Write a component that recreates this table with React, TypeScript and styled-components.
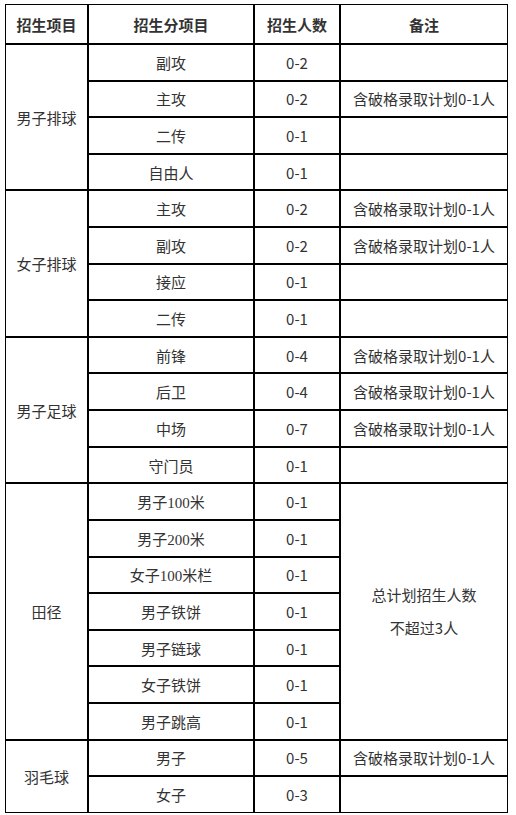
import * as React from 'react';
import styled, { createGlobalStyle } from 'styled-components';

const GlobalStyle = createGlobalStyle`
  html, body {
    margin: 0;
    padding: 0;
    background: #fff;
  }
  body {
    font-family: "Noto Sans CJK SC", "Noto Sans", sans-serif;
    color: #333;
  }
`;

const Page = styled.div`
  padding: 4px 0 0 5px;
`;

const Table = styled.table`
  width: 503px;
  table-layout: fixed;
  border-collapse: separate;
  border-spacing: 0;
  font-size: 15px;
`;

const HeadRow = styled.tr`
  height: 40px;
`;

const Row = styled.tr`
  height: 36.62px;
`;

const Th = styled.th`
  border: 1px solid #000;
  padding: 0;
  font-weight: 700;
  text-align: center;
  vertical-align: middle;
`;

const Td = styled.td`
  border: 1px solid #000;
  padding: 0;
  text-align: center;
  vertical-align: middle;
  white-space: nowrap;
`;

const Serif = styled.span`
  font-family: "Liberation Serif", serif;
`;

const NoteLine = styled.div`
  line-height: 33px;
`;

const NOTE = '含破格录取计划0-1人';

type Sub = { name: React.ReactNode; count: string; note?: string };
type Group = { name: string; rows: Sub[]; sharedNote?: string[] };

const m = (pre: string, num: string, post: string) => (
  <>
    {pre}
    <Serif>{num}</Serif>
    {post}
  </>
);

const groups: Group[] = [
  {
    name: '男子排球',
    rows: [
      { name: '副攻', count: '0-2', note: '' },
      { name: '主攻', count: '0-2', note: NOTE },
      { name: '二传', count: '0-1', note: '' },
      { name: '自由人', count: '0-1', note: '' },
    ],
  },
  {
    name: '女子排球',
    rows: [
      { name: '主攻', count: '0-2', note: NOTE },
      { name: '副攻', count: '0-2', note: NOTE },
      { name: '接应', count: '0-1', note: '' },
      { name: '二传', count: '0-1', note: '' },
    ],
  },
  {
    name: '男子足球',
    rows: [
      { name: '前锋', count: '0-4', note: NOTE },
      { name: '后卫', count: '0-4', note: NOTE },
      { name: '中场', count: '0-7', note: NOTE },
      { name: '守门员', count: '0-1', note: '' },
    ],
  },
  {
    name: '田径',
    sharedNote: ['总计划招生人数', '不超过3人'],
    rows: [
      { name: m('男子', '100', '米'), count: '0-1' },
      { name: m('男子', '200', '米'), count: '0-1' },
      { name: m('女子', '100', '米栏'), count: '0-1' },
      { name: '男子铁饼', count: '0-1' },
      { name: '男子链球', count: '0-1' },
      { name: '女子铁饼', count: '0-1' },
      { name: '男子跳高', count: '0-1' },
    ],
  },
  {
    name: '羽毛球',
    rows: [
      { name: '男子', count: '0-5', note: NOTE },
      { name: '女子', count: '0-3', note: '' },
    ],
  },
];

const App = () => {
  return (
    <Page>
      <GlobalStyle />
      <Table>
        <colgroup>
          <col style={{ width: 83 }} />
          <col style={{ width: 166 }} />
          <col style={{ width: 86 }} />
          <col style={{ width: 168 }} />
        </colgroup>
        <thead>
          <HeadRow>
            <Th>招生项目</Th>
            <Th>招生分项目</Th>
            <Th>招生人数</Th>
            <Th>备注</Th>
          </HeadRow>
        </thead>
        <tbody>
          {groups.map((group, gi) =>
            group.rows.map((row, ri) => (
              <Row key={`row-${gi}-${ri}`}>
                {ri === 0 && <Td rowSpan={group.rows.length}>{group.name}</Td>}
                <Td>{row.name}</Td>
                <Td>{row.count}</Td>
                {group.sharedNote ? (
                  ri === 0 && (
                    <Td rowSpan={group.rows.length}>
                      {group.sharedNote.map(line => (
                        <NoteLine key={line}>{line}</NoteLine>
                      ))}
                    </Td>
                  )
                ) : (
                  <Td>{row.note}</Td>
                )}
              </Row>
            ))
          )}
        </tbody>
      </Table>
    </Page>
  );
};

export default App;
